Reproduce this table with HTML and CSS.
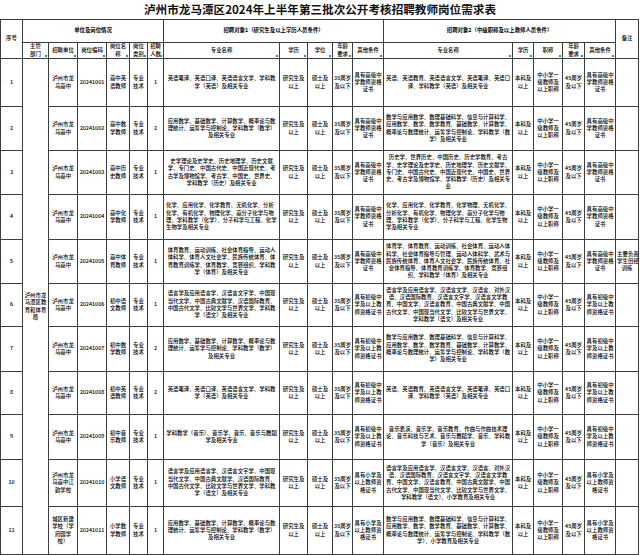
FILE: index.html
```html
<!DOCTYPE html>
<html lang="zh-CN">
<head>
<meta charset="utf-8">
<title>泸州市龙马潭区2024年上半年第三批次公开考核招聘教师岗位需求表</title>
<link rel="stylesheet" href="styles.css">
</head>
<body>
<div class="title">泸州市龙马潭区2024年上半年第三批次公开考核招聘教师岗位需求表</div>
<table class="sheet">
  <colgroup>
    <col class="w22"><col class="w26"><col class="w29"><col class="w29"><col class="w23"><col class="w18"><col class="w16">
    <col class="w116"><col class="w28"><col class="w25"><col class="w20"><col class="w31">
    <col class="w129"><col class="w21"><col class="w29"><col class="w22"><col class="w31">
    <col class="w23">
  </colgroup>
  <thead>
    <tr class="hh1">
      <th rowspan="2" class="plain">序号</th>
      <th colspan="6" class="group">单位及岗位情况</th>
      <th colspan="5" class="group">招聘对象1（研究生及以上学历人员条件）</th>
      <th colspan="5" class="group">招聘对象2（中级职称及以上教师人员条件）</th>
      <th rowspan="2" class="plain">备注</th>
    </tr>
    <tr class="hh2">
      <th class="flt">主管<br>部门</th>
      <th class="flt">招聘单位</th>
      <th class="flt">岗位编码</th>
      <th class="flt">岗位名<br>称</th>
      <th class="flt">岗位<br>类别</th>
      <th class="flt">招聘<br>人数</th>
      <th class="flt">专业名称</th>
      <th class="flt">学历</th>
      <th class="flt">学位</th>
      <th class="flt">年龄<br>要求</th>
      <th class="flt">其他条件</th>
      <th class="flt">专业名称</th>
      <th class="flt">学历</th>
      <th class="flt">职称</th>
      <th class="flt">年龄<br>要求</th>
      <th class="flt">其他条件</th>
    </tr>
  </thead>
  <tbody>
    <tr class="h48">
      <td>1</td>
      <td rowspan="11">泸州市龙<br>马潭区教<br>育和体育<br>局</td>
      <td>泸州市龙<br>马高中</td>
      <td>20241001</td>
      <td>高中英<br>语教师</td>
      <td>专业<br>技术</td>
      <td>1</td>
      <td class="long">英语笔译、英语口译、英语语言文学、学科教学（英语）及相关专业</td>
      <td>研究生及<br>以上</td>
      <td>硕士及<br>以上</td>
      <td>35周岁<br>及以下</td>
      <td>具有高级中<br>学教师资格<br>证书</td>
      <td class="long">英语、英语教育、英语语言文学、英语笔译、英语口译、学科教学（英语）及相关专业</td>
      <td>本科及<br>以上</td>
      <td>中小学一<br>级教师及<br>以上职称</td>
      <td>45周岁<br>及以下</td>
      <td>具有高级中<br>学教师资格<br>证书</td>
      <td></td>
    </tr>
    <tr class="h44">
      <td>2</td>
      <td>泸州市龙<br>马高中</td>
      <td>20241002</td>
      <td>高中数<br>学教师</td>
      <td>专业<br>技术</td>
      <td>2</td>
      <td class="long">应用数学、基础数学、计算数学、概率论与数理统计、运筹学与控制论、学科教学（数学）及相关专业</td>
      <td>研究生及<br>以上</td>
      <td>硕士及<br>以上</td>
      <td>35周岁<br>及以下</td>
      <td>具有高级中<br>学教师资格<br>证书</td>
      <td class="long">数学与应用数学、数理基础科学、信息与计算科学、应用数学、数学、数学教育、基础数学、计算数学、概率论与数理统计、运筹学与控制论、学科教学（数学）及相关专业</td>
      <td>本科及<br>以上</td>
      <td>中小学一<br>级教师及<br>以上职称</td>
      <td>45周岁<br>及以下</td>
      <td>具有高级中<br>学教师资格<br>证书</td>
      <td></td>
    </tr>
    <tr class="h44">
      <td>3</td>
      <td>泸州市龙<br>马高中</td>
      <td>20241003</td>
      <td>高中历<br>史教师</td>
      <td>专业<br>技术</td>
      <td>1</td>
      <td class="long">史学理论及史学史、历史地理学、历史文献学、专门史、中国古代史、中国近现代史、考古学及博物馆学、考古学、中国史、世界史、学科教学（历史）及相关专业</td>
      <td>研究生及<br>以上</td>
      <td>硕士及<br>以上</td>
      <td>35周岁<br>及以下</td>
      <td>具有高级中<br>学教师资格<br>证书</td>
      <td class="long">历史学、世界历史、中国历史、历史学教育、考古学、史学理论及史学史、历史地理学、历史文献学、专门史、中国古代史、中国近现代史、中国史、世界史、考古学及博物馆学、学科教学（历史）及相关专业</td>
      <td>本科及<br>以上</td>
      <td>中小学一<br>级教师及<br>以上职称</td>
      <td>45周岁<br>及以下</td>
      <td>具有高级中<br>学教师资格<br>证书</td>
      <td></td>
    </tr>
    <tr class="h45">
      <td>4</td>
      <td>泸州市龙<br>马高中</td>
      <td>20241004</td>
      <td>高中化<br>学教师</td>
      <td>专业<br>技术</td>
      <td>1</td>
      <td class="long left">化学、应用化学、化学教育、无机化学、分析化学、有机化学、物理化学、高分子化学与物理、学科教学（化学）、分子科学与工程、化学生物学及相关专业</td>
      <td>研究生及<br>以上</td>
      <td>硕士及<br>以上</td>
      <td>35周岁<br>及以下</td>
      <td>具有高级中<br>学教师资格<br>证书</td>
      <td class="long left">化学、应用化学、化学教育、化学物理、无机化学、分析化学、有机化学、物理化学、高分子化学与物理、学科教学（化学）、分子科学与工程、化学生物学及相关专业</td>
      <td>本科及<br>以上</td>
      <td>中小学一<br>级教师及<br>以上职称</td>
      <td>45周岁<br>及以下</td>
      <td>具有高级中<br>学教师资格<br>证书</td>
      <td></td>
    </tr>
    <tr class="h44">
      <td>5</td>
      <td>泸州市龙<br>马高中</td>
      <td>20241005</td>
      <td>高中体<br>育教师</td>
      <td>专业<br>技术</td>
      <td>1</td>
      <td class="long">体育教育、运动训练、社会体育指导、运动人体科学、体育人文社会学、民族传统体育、体育教育训练学、体育教学、竞赛组织、学科教学（体育）及相关专业</td>
      <td>研究生及<br>以上</td>
      <td>硕士及<br>以上</td>
      <td>35周岁<br>及以下</td>
      <td>具有高级中<br>学教师资格<br>证书</td>
      <td class="long">体育学、体育教育、运动训练、社会体育、运动人体科学、社会体育指导与管理、运动人体科学、武术与民族传统体育、体育人文社会学、民族传统体育、社会体育指导、体育教育训练学、体育教学、竞赛组织、学科教学（体育）及相关专业</td>
      <td>本科及<br>以上</td>
      <td>中小学一<br>级教师及<br>以上职称</td>
      <td>45周岁<br>及以下</td>
      <td>具有高级中<br>学教师资格<br>证书</td>
      <td>主要负责<br>学生田径<br>训练</td>
    </tr>
    <tr class="h43">
      <td>6</td>
      <td>泸州市龙<br>马高中</td>
      <td>20241006</td>
      <td>初中语<br>文教师</td>
      <td>专业<br>技术</td>
      <td>1</td>
      <td class="long">语言学及应用语言学、汉语言文字学、中国现当代文学、中国古典文献学、汉语国际教育、中国古代文学、比较文学与世界文学、学科教学（语文）及相关专业</td>
      <td>研究生及<br>以上</td>
      <td>硕士及<br>以上</td>
      <td>35周岁<br>及以下</td>
      <td>具有初级中<br>学及以上教<br>师资格证书</td>
      <td class="long">语言学及应用语言学、汉语言文学、汉语言、对外汉语、汉语国际教育、汉语言文字学、汉语言文学教育、中国文学、汉语言教育、中国古典文献学、中国古代文学、中国现当代文学、比较文学与世界文学、学科教学（语文）及相关专业</td>
      <td>本科及<br>以上</td>
      <td>中小学一<br>级教师及<br>以上职称</td>
      <td>45周岁<br>及以下</td>
      <td>具有初级中<br>学及以上教<br>师资格证书</td>
      <td></td>
    </tr>
    <tr class="h45">
      <td>7</td>
      <td>泸州市龙<br>马高中</td>
      <td>20241007</td>
      <td>初中数<br>学教师</td>
      <td>专业<br>技术</td>
      <td>2</td>
      <td class="long">应用数学、基础数学、计算数学、概率论与数理统计、运筹学与控制论、学科教学（数学）及相关专业</td>
      <td>研究生及<br>以上</td>
      <td>硕士及<br>以上</td>
      <td>35周岁<br>及以下</td>
      <td>具有初级中<br>学及以上教<br>师资格证书</td>
      <td class="long">数学与应用数学、数理基础科学、信息与计算科学、应用数学、数学、数学教育、基础数学、计算数学、概率论与数理统计、运筹学与控制论、学科教学（数学）及相关专业</td>
      <td>本科及<br>以上</td>
      <td>中小学一<br>级教师及<br>以上职称</td>
      <td>45周岁<br>及以下</td>
      <td>具有初级中<br>学及以上教<br>师资格证书</td>
      <td></td>
    </tr>
    <tr class="h43">
      <td>8</td>
      <td>泸州市龙<br>马高中</td>
      <td>20241008</td>
      <td>初中英<br>语教师</td>
      <td>专业<br>技术</td>
      <td>2</td>
      <td class="long">英语笔译、英语口译、英语语言文学、学科教学（英语）及相关专业</td>
      <td>研究生及<br>以上</td>
      <td>硕士及<br>以上</td>
      <td>35周岁<br>及以下</td>
      <td>具有初级中<br>学及以上教<br>师资格证书</td>
      <td class="long">英语、英语教育、英语语言文学、英语笔译、英语口译、学科教学（英语）及相关专业</td>
      <td>本科及<br>以上</td>
      <td>中小学一<br>级教师及<br>以上职称</td>
      <td>45周岁<br>及以下</td>
      <td>具有初级中<br>学及以上教<br>师资格证书</td>
      <td></td>
    </tr>
    <tr class="h45">
      <td>9</td>
      <td>泸州市龙<br>马高中</td>
      <td>20241009</td>
      <td>初中音<br>乐教师</td>
      <td>专业<br>技术</td>
      <td>1</td>
      <td class="long">学科教学（音乐）、音乐学、音乐、音乐与舞蹈学及相关专业</td>
      <td>研究生及<br>以上</td>
      <td>硕士及<br>以上</td>
      <td>35周岁<br>及以下</td>
      <td>具有初级中<br>学及以上教<br>师资格证书</td>
      <td class="long">音乐表演、音乐学、音乐教育、作曲与作曲技术理论、音乐科技与艺术、音乐与舞蹈学、音乐、学科教学（音乐）及相关专业</td>
      <td>本科及<br>以上</td>
      <td>中小学一<br>级教师及<br>以上职称</td>
      <td>45周岁<br>及以下</td>
      <td>具有初级中<br>学及以上教<br>师资格证书</td>
      <td></td>
    </tr>
    <tr class="h47">
      <td>10</td>
      <td>泸州市龙<br>马高中江<br>韵学校</td>
      <td>20241010</td>
      <td>小学语<br>文教师</td>
      <td>专业<br>技术</td>
      <td>1</td>
      <td class="long">语言学及应用语言学、汉语言文字学、中国现当代文学、中国古典文献学、汉语国际教育、中国古代文学、比较文学与世界文学、学科教学（语文）及相关专业</td>
      <td>研究生及<br>以上</td>
      <td>硕士及<br>以上</td>
      <td>35周岁<br>及以下</td>
      <td>具有小学及<br>以上教师资<br>格证书</td>
      <td class="long">语言学及应用语言学、汉语言文学、汉语言、对外汉语、汉语国际教育、汉语言文字学、汉语言文学教育、中国文学、汉语言教育、中国古典文献学、中国古代文学、中国现当代文学、比较文学与世界文学、学科教学（语文）、小学教育及相关专业</td>
      <td>本科及<br>以上</td>
      <td>中小学一<br>级教师及<br>以上职称</td>
      <td>45周岁<br>及以下</td>
      <td>具有小学及<br>以上教师资<br>格证书</td>
      <td></td>
    </tr>
    <tr class="h48">
      <td>11</td>
      <td>城区新建<br>学校（学<br>府园学<br>校）</td>
      <td>20241011</td>
      <td>小学数<br>学教师</td>
      <td>专业<br>技术</td>
      <td>1</td>
      <td class="long">应用数学、基础数学、计算数学、概率论与数理统计、运筹学与控制论、学科教学（数学）及相关专业</td>
      <td>研究生及<br>以上</td>
      <td>硕士及<br>以上</td>
      <td>35周岁<br>及以下</td>
      <td>具有小学及<br>以上教师资<br>格证书</td>
      <td class="long">数学与应用数学、数理基础科学、信息与计算科学、应用数学、数学、数学教育、基础数学、计算数学、概率论与数理统计、运筹学与控制论、学科教学（数学）、小学教育及相关专业</td>
      <td>本科及<br>以上</td>
      <td>中小学一<br>级教师及<br>以上职称</td>
      <td>45周岁<br>及以下</td>
      <td>具有小学及<br>以上教师资<br>格证书</td>
      <td></td>
    </tr>
  </tbody>
</table>
</body>
</html>
```
FILE: styles.css
```css
html, body {
  margin: 0;
  padding: 0;
  background: #ffffff;
}
body {
  font-family: "Noto Sans CJK SC", "Noto Sans", sans-serif;
  color: #000000;
  width: 640px;
  overflow: hidden;
}
.title {
  height: 19px;
  line-height: 19px;
  text-align: center;
  font-size: 11.6px;
  font-weight: 700;
  color: #111111;
  white-space: nowrap;
}
.sheet {
  border-collapse: collapse;
  table-layout: fixed;
  width: 638px;
}
.sheet th, .sheet td {
  border: 1px solid #3c3c3c;
  padding: 0 1px;
  font-size: 5.4px;
  font-weight: 500;
  line-height: 7.3px;
  color: #000000;
  text-align: center;
  vertical-align: middle;
  white-space: nowrap;
  overflow: hidden;
}
.sheet th {
  position: relative;
}
.sheet th.group {
  font-weight: 700;
}
.sheet th.flt::after {
  content: "";
  position: absolute;
  right: 1px;
  bottom: 1px;
  width: 2px;
  height: 2px;
  background: #2f9e52;
}
.sheet td.long {
  padding: 0 2px;
  white-space: normal;
}
.sheet td.left {
  text-align: left;
}
.hh1 { height: 23px; }
.hh2 { height: 16px; }
.h43 { height: 43px; }
.h44 { height: 44px; }
.h45 { height: 45px; }
.h47 { height: 47px; }
.h48 { height: 48px; }
.w16 { width: 16px; }
.w18 { width: 18px; }
.w20 { width: 20px; }
.w21 { width: 21px; }
.w22 { width: 22px; }
.w23 { width: 23px; }
.w25 { width: 25px; }
.w26 { width: 26px; }
.w28 { width: 28px; }
.w29 { width: 29px; }
.w31 { width: 31px; }
.w116 { width: 116px; }
.w129 { width: 129px; }
```
